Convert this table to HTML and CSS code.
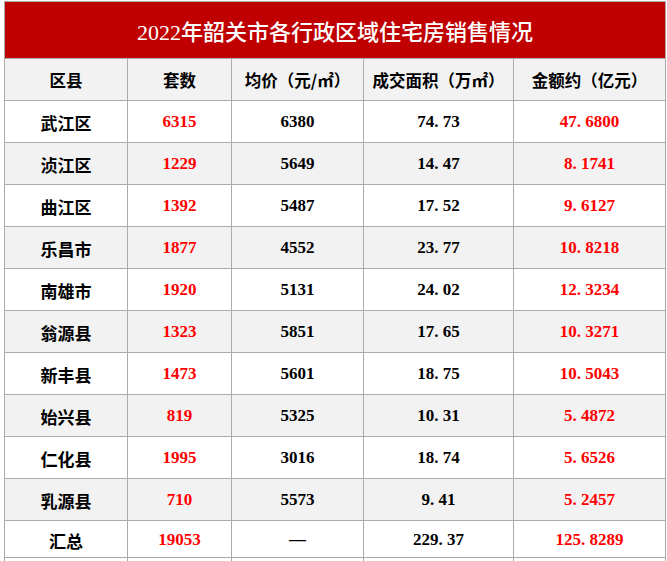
FILE: index.html
```html
<!DOCTYPE html>
<html lang="zh-CN">
<head>
<meta charset="utf-8">
<title>2022年韶关市各行政区域住宅房销售情况</title>
<link rel="stylesheet" href="styles.css">
</head>
<body>
<table class="sheet">
  <colgroup>
    <col class="c1"><col class="c2"><col class="c3"><col class="c4"><col class="c5">
  </colgroup>
  <tr class="title-row"><td colspan="5" class="title">2022年韶关市各行政区域住宅房销售情况</td></tr>
  <tr class="head">
    <td>区县</td><td>套数</td><td>均价（元/㎡）</td><td>成交面积（万㎡）</td><td>金额约（亿元）</td>
  </tr>
  <tr class="row"><td class="name">武江区</td><td class="num red">6315</td><td class="num">6380</td><td class="num">74<span class="pt">.</span>73</td><td class="num red">47<span class="pt">.</span>6800</td></tr>
  <tr class="row alt"><td class="name">浈江区</td><td class="num red">1229</td><td class="num">5649</td><td class="num">14<span class="pt">.</span>47</td><td class="num red">8<span class="pt">.</span>1741</td></tr>
  <tr class="row"><td class="name">曲江区</td><td class="num red">1392</td><td class="num">5487</td><td class="num">17<span class="pt">.</span>52</td><td class="num red">9<span class="pt">.</span>6127</td></tr>
  <tr class="row alt"><td class="name">乐昌市</td><td class="num red">1877</td><td class="num">4552</td><td class="num">23<span class="pt">.</span>77</td><td class="num red">10<span class="pt">.</span>8218</td></tr>
  <tr class="row"><td class="name">南雄市</td><td class="num red">1920</td><td class="num">5131</td><td class="num">24<span class="pt">.</span>02</td><td class="num red">12<span class="pt">.</span>3234</td></tr>
  <tr class="row alt"><td class="name">翁源县</td><td class="num red">1323</td><td class="num">5851</td><td class="num">17<span class="pt">.</span>65</td><td class="num red">10<span class="pt">.</span>3271</td></tr>
  <tr class="row"><td class="name">新丰县</td><td class="num red">1473</td><td class="num">5601</td><td class="num">18<span class="pt">.</span>75</td><td class="num red">10<span class="pt">.</span>5043</td></tr>
  <tr class="row alt"><td class="name">始兴县</td><td class="num red">819</td><td class="num">5325</td><td class="num">10<span class="pt">.</span>31</td><td class="num red">5<span class="pt">.</span>4872</td></tr>
  <tr class="row"><td class="name">仁化县</td><td class="num red">1995</td><td class="num">3016</td><td class="num">18<span class="pt">.</span>74</td><td class="num red">5<span class="pt">.</span>6526</td></tr>
  <tr class="row alt"><td class="name">乳源县</td><td class="num red">710</td><td class="num">5573</td><td class="num">9<span class="pt">.</span>41</td><td class="num red">5<span class="pt">.</span>2457</td></tr>
  <tr class="row total"><td class="name">汇总</td><td class="num red">19053</td><td class="num">—</td><td class="num">229<span class="pt">.</span>37</td><td class="num red">125<span class="pt">.</span>8289</td></tr>
  <tr class="blank"><td></td><td></td><td></td><td></td><td></td></tr>
</table>
</body>
</html>
```

FILE: styles.css
```css
html, body {
  margin: 0;
  padding: 0;
  background: #ffffff;
}

.sheet {
  border-collapse: collapse;
  table-layout: fixed;
  width: 662px;
  margin: 1px 0 0 4px;
  font-family: "Noto Sans CJK SC", sans-serif;
  color: #000000;
}

.c1 { width: 123px; }
.c2 { width: 104px; }
.c3 { width: 132px; }
.c4 { width: 150px; }
.c5 { width: 152px; }

.sheet td {
  border: 1px solid #ababab;
  padding: 0;
  text-align: center;
  vertical-align: middle;
  white-space: nowrap;
  overflow: hidden;
}

.title-row td {
  height: 56px;
}

.title {
  background: #c00000;
  color: #ffffff;
  font-family: "Liberation Serif", "Noto Sans CJK SC", serif;
  font-size: 22px;
  font-weight: 500;
}

.head td {
  height: 41px;
  background: #f2f2f2;
  font-size: 16.5px;
  font-weight: 700;
}

.row td {
  height: 40px;
  padding-top: 1px;
  background: #ffffff;
}

.row.alt td {
  background: #f2f2f2;
}

.row.total td {
  height: 34px;
  padding-top: 2px;
}

.name {
  font-size: 17px;
  font-weight: 700;
}

.num {
  font-family: "Liberation Serif", serif;
  font-size: 17px;
  font-weight: 700;
}

.pt {
  display: inline-block;
  width: 8.5px;
  text-align: left;
}

.red {
  color: #ff0000;
}

.blank td {
  height: 10px;
  background: #ffffff;
}
```
